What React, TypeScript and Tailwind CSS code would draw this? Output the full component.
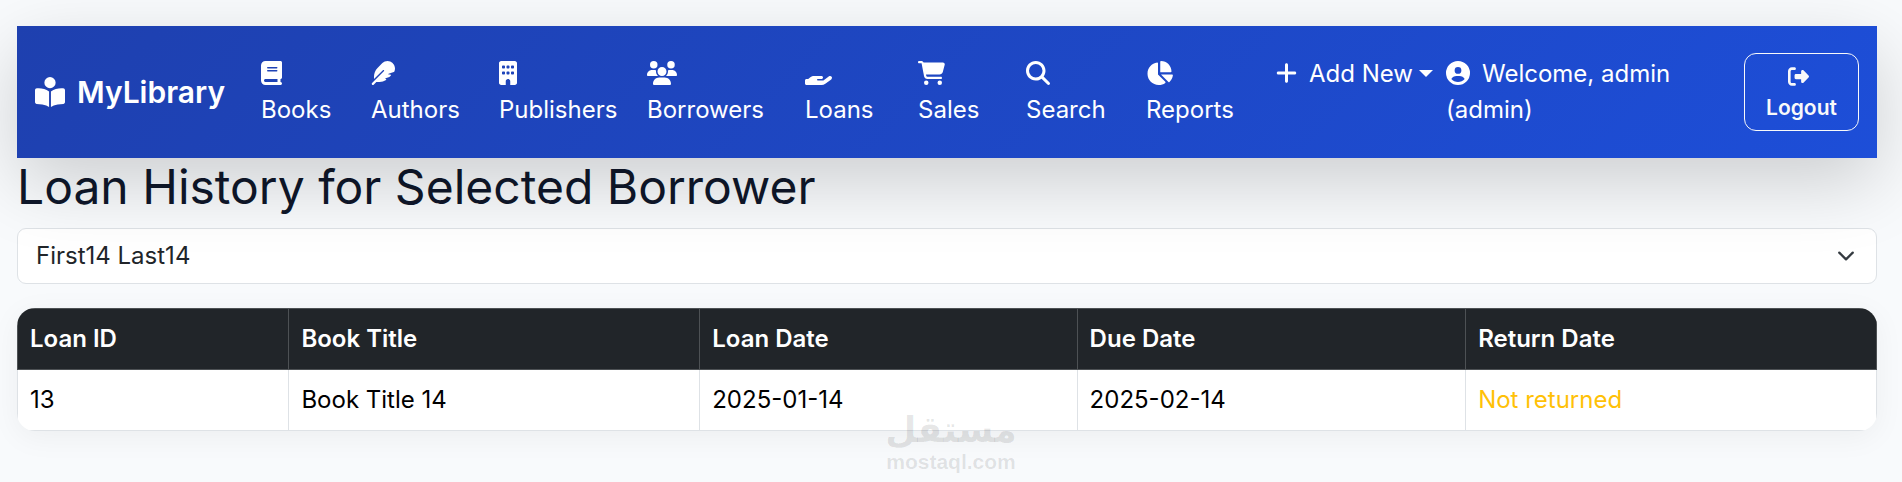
import React, { useState } from 'react';
import {
    FaBook,
    FaBookOpenReader,
    FaBuilding,
    FaCartShopping,
    FaChartPie,
    FaCircleUser,
    FaFeather,
    FaHandHolding,
    FaMagnifyingGlass,
    FaPlus,
    FaRightFromBracket,
    FaUsers
} from 'react-icons/fa6';

const navItems = [
    { label: 'Books', icon: FaBook, iconWidth: 'w-[21px]', width: 'w-[110px]' },
    { label: 'Authors', icon: FaFeather, iconWidth: 'w-6', width: 'w-32' },
    { label: 'Publishers', icon: FaBuilding, iconWidth: 'w-[18px]', width: 'w-[148px]' },
    { label: 'Borrowers', icon: FaUsers, iconWidth: 'w-[30px]', width: 'w-[158px]' },
    { label: 'Loans', icon: FaHandHolding, iconWidth: 'w-[27px]', width: 'w-[113px]' },
    { label: 'Sales', icon: FaCartShopping, iconWidth: 'w-[27px]', width: 'w-[108px]' },
    { label: 'Search', icon: FaMagnifyingGlass, iconWidth: 'w-6', width: 'w-[120px]' },
    { label: 'Reports', icon: FaChartPie, iconWidth: 'w-[27px]', width: 'w-[130px]' }
];

const columns = [
    { label: 'Loan ID', width: 'w-[14.6%]' },
    { label: 'Book Title', width: 'w-[22.1%]' },
    { label: 'Loan Date', width: 'w-[20.3%]' },
    { label: 'Due Date', width: 'w-[20.9%]' },
    { label: 'Return Date', width: 'w-[22.1%]' }
];

const loans = [
    { id: 13, title: 'Book Title 14', loanDate: '2025-01-14', dueDate: '2025-02-14', returnDate: '' }
];

const Navbar = () => (
    <nav className="relative z-10 flex items-center px-[18px] py-[27px] bg-linear-135 from-[#1e40af] to-[#1d4ed8] text-white shadow-[0_24px_72px_rgba(0,0,0,0.175)]">
        <a href="#" className="flex items-center gap-3 w-[226px] shrink-0 text-[30px] font-semibold">
            <FaBookOpenReader className="size-[30px]" />
            MyLibrary
        </a>
        <ul className="flex">
            {navItems.map(({ label, icon: Icon, iconWidth, width }) => (
                <li key={label} className={width}>
                    <a href="#" className="block">
                        <span className="flex items-center h-9 pb-0.5">
                            <Icon className={`h-6 ${iconWidth}`} />
                        </span>
                        {label}
                    </a>
                </li>
            ))}
            <li className="w-[170px]">
                <button type="button" className="flex items-center whitespace-nowrap">
                    <span className="mr-3 pb-0.5">
                        <FaPlus className="h-6 w-[21px]" />
                    </span>
                    Add New
                    <span className="ml-1.5 mb-0.5 border-x-[7px] border-t-[7px] border-x-transparent border-t-white" />
                </button>
            </li>
        </ul>
        <a href="#" className="max-w-[260px]">
            <FaCircleUser className="inline size-6 mr-3 align-[-3px]" />
            Welcome, admin (admin)
        </a>
        <button
            type="button"
            className="ml-auto flex flex-col items-center w-[115px] rounded-xl border border-[#f8f9fa] py-1.5 text-[21px] leading-8 font-semibold text-[#f8f9fa]"
        >
            <span className="flex items-center h-8 mr-1.5">
                <FaRightFromBracket />
            </span>
            Logout
        </button>
    </nav>
);

const Watermark = () => (
    <div className="pointer-events-none absolute bottom-2 left-1/2 -translate-x-1/2 flex flex-col items-center font-bold text-black/10">
        <span lang="ar" dir="rtl" className="font-['DejaVu_Sans',sans-serif] text-[36px] leading-10">مستقل</span>
        <span className="font-['Liberation_Sans',sans-serif] text-[21px] leading-6">mostaql.com</span>
    </div>
);

export default function App() {
    const [borrower, setBorrower] = useState('14');

    return (
        <div className="relative min-h-screen bg-[#f8fafc] pt-[26px] pl-[17px] pr-[25px] font-['Inter',sans-serif] text-2xl leading-9 text-[#0f172a] overflow-hidden">
            <Navbar />

            <h1 className="mb-3 text-5xl leading-[58px]">Loan History for Selected Borrower</h1>

            <div className="relative mb-6">
                <select
                    aria-label="Borrower"
                    value={borrower}
                    onChange={e => setBorrower(e.target.value)}
                    className="block w-full h-14 appearance-none rounded-[9px] border border-[#dee2e6] bg-white pl-[18px] pr-14 text-[#212529]"
                >
                    <option value="14">First14 Last14</option>
                </select>
                <svg viewBox="0 0 16 16" className="pointer-events-none absolute right-[22px] top-[19px] size-[18px]" fill="none" stroke="#343a40" strokeWidth="2" strokeLinecap="round" strokeLinejoin="round">
                    <path d="m2 5 6 6 6-6" />
                </svg>
            </div>

            <div className="overflow-hidden rounded-[18px] bg-white shadow-[0_6px_30px_rgba(0,0,0,0.05)]">
                <table className="w-full table-fixed border-collapse text-left">
                    <thead>
                        <tr className="bg-[#212529] text-white">
                            {columns.map(c => (
                                <th key={c.label} className={`${c.width} border border-[#4d5154] p-3 font-semibold`}>{c.label}</th>
                            ))}
                        </tr>
                    </thead>
                    <tbody className="text-black">
                        {loans.map(l => (
                            <tr key={l.id}>
                                <td className="border border-[#dee2e6] p-3">{l.id}</td>
                                <td className="border border-[#dee2e6] p-3">{l.title}</td>
                                <td className="border border-[#dee2e6] p-3">{l.loanDate}</td>
                                <td className="border border-[#dee2e6] p-3">{l.dueDate}</td>
                                <td className="border border-[#dee2e6] p-3">
                                    {l.returnDate || <span className="text-[#ffc107]">Not returned</span>}
                                </td>
                            </tr>
                        ))}
                    </tbody>
                </table>
            </div>

            <Watermark />
        </div>
    );
}
